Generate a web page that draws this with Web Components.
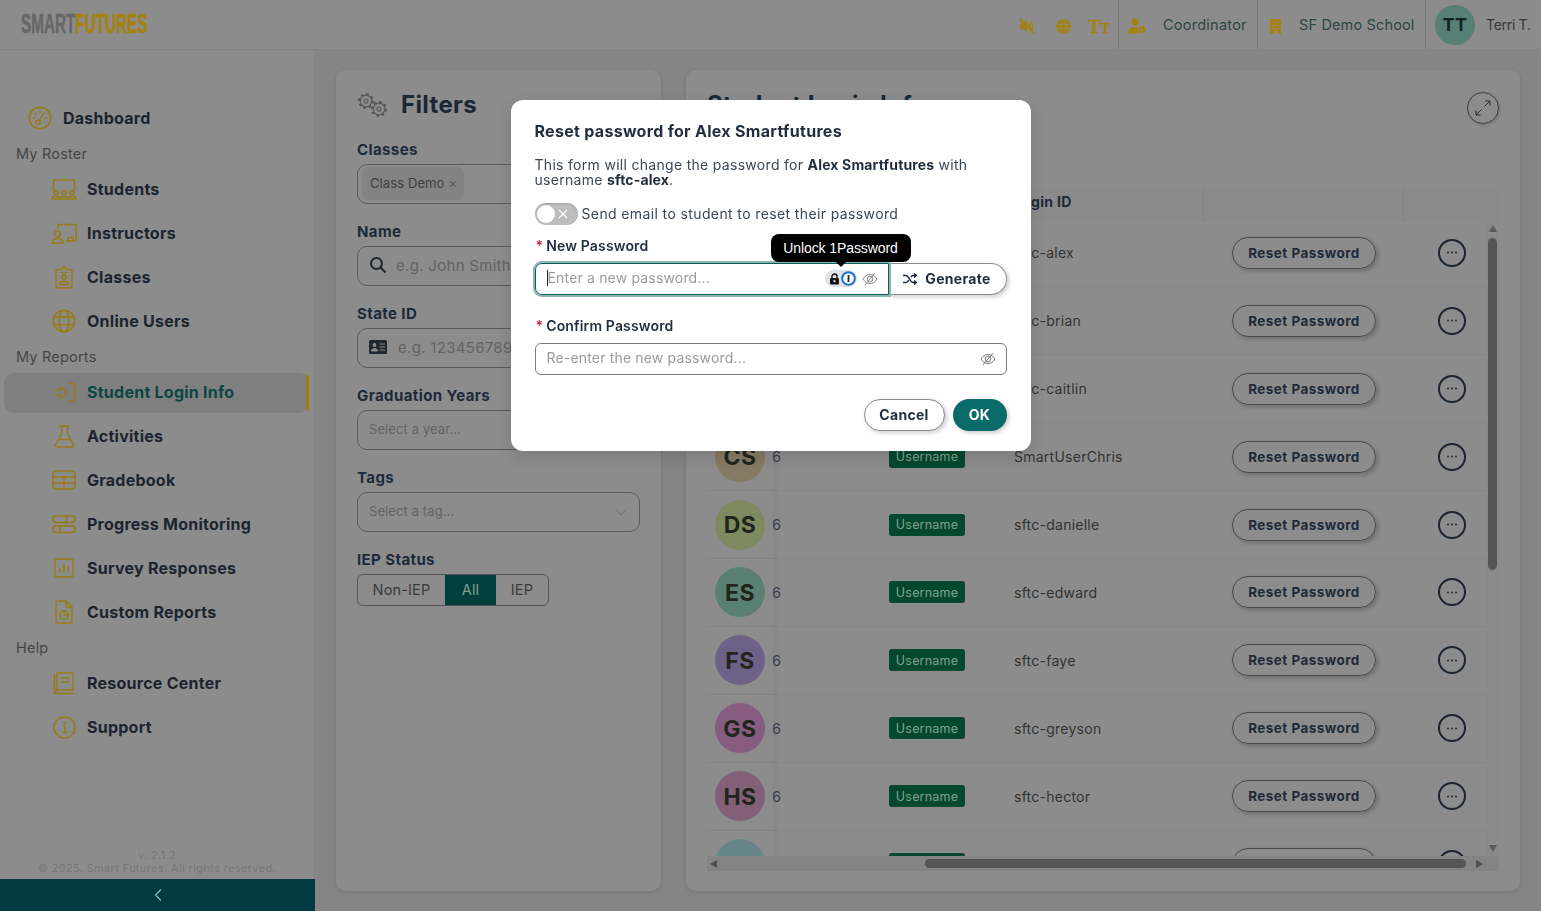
<!DOCTYPE html>
<html lang="en"><head><meta charset="utf-8"><title>Student Login Info</title>
<style>
html,body{margin:0;height:100%;overflow:hidden;background:#858585;font-family:Inter,"Liberation Sans",sans-serif;color:#1c2430}
</style></head>
<body>
<sf-app>
  <sf-header slot="header"></sf-header>
  <sf-sidebar slot="side"></sf-sidebar>
  <sf-filters slot="filters"></sf-filters>
  <sf-main slot="main"></sf-main>
</sf-app>
<sf-modal></sf-modal>
<script>
const FONT='font-family:Inter,"Liberation Sans",sans-serif;';
function def(name,css,html){
  customElements.define(name,class extends HTMLElement{
    connectedCallback(){
      if(this.shadowRoot)return;
      const r=this.attachShadow({mode:'open'});
      const h=typeof html==='function'?html(this):html;
      r.innerHTML='<style>'+css+'</style>'+h;
    }
  });
}
const g=(w,h,vb,inner,c='#977b18',sw=1.5)=>`<svg width="${w}" height="${h}" viewBox="${vb}" fill="none" stroke="${c}" stroke-width="${sw}" stroke-linecap="round" stroke-linejoin="round">${inner}</svg>`;
const ICONS={
 dashboard:g(24,24,'0 0 24 24','<circle cx="12" cy="12" r="10.8"/><path d="M11.2 14.6 15.8 6.5"/><circle cx="10.2" cy="16.2" r="2"/><path d="M5.2 12h1.600M7.400 7.400l1 1M12 4.600v1.600M18.800 12h-1.600"/>'),
 students:g(26,21,'0 0 26 21','<path d="M2.500 11V3a2 2 0 0 1 2-2h17a2 2 0 0 1 2 2v8"/><circle cx="5" cy="13.500" r="1.900"/><circle cx="13" cy="13.500" r="1.900"/><circle cx="21" cy="13.500" r="1.900"/><path d="M1 20c0-3.600 8-3.600 8 0zM9 20c0-3.600 8-3.600 8 0zM17 20c0-3.600 8-3.600 8 0z"/>'),
 instructors:g(26,21,'0 0 26 21','<path d="M7 5V2.500a1 1 0 0 1 1-1H25V18H15"/><circle cx="6.500" cy="11" r="3"/><path d="M1 20c0-6 11-6 11 0z"/><path d="M17 18v-3.500h5V18"/>'),
 classes:g(18,24,'0 0 18 24','<path d="M3 4.500h3L9 1.500l3 3h3a2 2 0 0 1 2 2v14.500a2 2 0 0 1-2 2H3a2 2 0 0 1-2-2V6.500a2 2 0 0 1 2-2z"/><path d="M6 7.500h6"/><circle cx="9" cy="12" r="2.200"/><path d="M4.500 19.500c0-4.500 9-4.500 9 0z"/>'),
 online:g(24,24,'0 0 24 24','<circle cx="12" cy="12" r="10.800"/><ellipse cx="12" cy="12" rx="4.800" ry="10.800"/><path d="M2 8.200h20M2 15.800h20"/>'),
 login:g(25,21,'0 0 25 21','<path d="M2 8h1M5 8h3.500V4.500L15 10.500l-6.500 6V13H5M2 13h1"/><path d="M17 1.500h4a2 2 0 0 1 2 2v14a2 2 0 0 1-2 2h-4"/>'),
 flask:g(21,23,'0 0 21 23','<path d="M6 1h9M7.500 1v8L1.500 19.500A1.700 1.700 0 0 0 3 22h15a1.700 1.700 0 0 0 1.500-2.500L13.500 9V1M4.800 14.500h11.400"/>'),
 grade:g(24,20,'0 0 24 20','<rect x="1" y="1" width="22" height="18" rx="3"/><path d="M1 7h22M1 13h22M12 7v12"/>'),
 progress:g(24,19,'0 0 24 19','<rect x="1" y="1" width="22" height="6.500" rx="3"/><rect x="1" y="11" width="22" height="6.500" rx="3"/><path d="M14.500 1v6.500M8 11v6.500"/>'),
 survey:g(20,20,'0 0 20 20','<rect x="1" y="1" width="18" height="18" rx="1.500"/><path d="M6 14v-3M10 14V7M14 14v-5"/>'),
 custom:g(18,24,'0 0 18 24','<path d="M2 1h9l6 6v15a1 1 0 0 1-1 1H2a1 1 0 0 1-1-1V2a1 1 0 0 1 1-1zM11 1v6h6"/><circle cx="9" cy="15" r="4.200"/><path d="M9 15V10.800M9 15h4.200"/>'),
 resource:g(22,23,'0 0 22 23','<path d="M4 18V2a1 1 0 0 1 1-1h14a1 1 0 0 1 1 1v16zM1.500 3v18.500H21M4 1v17M1.500 21.500 4 18M9 6h7M9 10h7"/>'),
 support:g(23,23,'0 0 23 23','<circle cx="11.500" cy="11.500" r="10.500"/><path d="M10 10h1.800v6.500M9.500 16.500h4.500"/><circle cx="11.500" cy="6.800" r=".6"/>')
};
const GH='#a3820f';
const HICONS={
 mute:`<svg width="20" height="18" viewBox="0 0 20 18"><path fill="${GH}" d="M2 6h3l5-3v12l-5-3H2z"/><path d="M12 6c1.200 1 1.200 5 0 6M14.500 4c2 2 2 8 0 10" stroke="${GH}" fill="none" stroke-width="1.800"/><path d="M2 1l16 16" stroke="${GH}" stroke-width="2.200"/></svg>`,
 globe:`<svg width="15" height="15" viewBox="0 0 15 15"><circle cx="7.500" cy="7.500" r="7.300" fill="${GH}"/><path d="M1 5.300h13M1 9.700h13M7.500 .5c-4 4-4 10 0 14M7.500 .5c4 4 4 10 0 14" fill="none" stroke="#8c8c8c" stroke-width=".7"/></svg>`,
 person:`<svg width="18" height="16" viewBox="0 0 18 16"><circle cx="7" cy="4" r="3.500" fill="${GH}"/><path fill="${GH}" d="M0 15.500c0-5 3-6.500 7-6.500 1.200 0 2 .2 2.800.4V15.500z"/><circle cx="13.800" cy="11.500" r="2.400" fill="none" stroke="${GH}" stroke-width="2.400"/></svg>`,
 building:`<svg width="11" height="15" viewBox="0 0 11 15"><path fill="${GH}" d="M0 0h11v15H7v-3H4v3H0z"/><path stroke="#8c8c8c" stroke-width="1.100" stroke-dasharray="1.400 1.300" d="M2 3.500h7M2 6.500h7M2 9.500h7"/></svg>`
};

def('sf-app',`:host{display:grid;grid-template-columns:315px 1fr;grid-template-rows:50px 1fr;height:100vh;background:#858585}
 ::slotted([slot=header]){grid-column:1/3}
 .m{display:flex;gap:25px;padding:20px 21px;min-width:0;min-height:0}`,
 `<slot name="header"></slot><slot name="side"></slot><div class="m"><slot name="filters"></slot><slot name="main"></slot></div>`);

def('sf-header',`:host{display:flex;justify-content:space-between;align-items:stretch;height:50px;background:#8c8c8c;box-sizing:border-box;border-bottom:1px solid #838383;${FONT}}
 .logo{display:flex;align-items:center;padding-left:21px;font:700 27px "Liberation Sans",sans-serif;height:49px;transform:scaleX(.566);transform-origin:21px 0;white-space:nowrap}
 .logo i{font-style:normal;color:#666;-webkit-text-stroke:.4px #666}.logo b{color:#a3820f;font-weight:700;-webkit-text-stroke:.7px #a3820f}
 .r{display:flex;align-items:stretch}
 .icons{display:flex;align-items:center;gap:18px;width:110px;padding-left:10px;padding-top:3px;box-sizing:border-box}
 .icons>*{width:18px;display:flex;justify-content:center;align-items:baseline}
 .tt{font:700 19px "Liberation Serif",serif;color:${GH};line-height:1;white-space:nowrap;-webkit-text-stroke:.3px ${GH}}.tt small{font-size:14px}
 .seg{display:flex;align-items:center;border-left:1px solid #777;box-sizing:border-box;font-size:14.500px;letter-spacing:.25px;color:#2f4543;white-space:nowrap}
 .a{width:139px;padding-left:9px;gap:17px}.b{width:168px;padding-left:12px;gap:18px;letter-spacing:.15px}.c{width:116px;padding-left:9px;gap:11px;color:#363636;font-size:14px;letter-spacing:-.3px}
 .s{display:flex;padding-top:3px}
 .av{width:40px;height:40px;border-radius:50%;background:#587f74;color:#132320;font-weight:700;font-size:18px;display:flex;align-items:center;justify-content:center;letter-spacing:.5px}`,
 `<div class="logo"><i>SMART</i><b>FUTURES</b></div>
  <div class="r"><div class="icons"><span>${HICONS.mute}</span><span>${HICONS.globe}</span><span class="tt">T<small>T</small></span></div>
  <div class="seg a"><span class="s">${HICONS.person}</span><span>Coordinator</span></div>
  <div class="seg b"><span class="s">${HICONS.building}</span><span>SF Demo School</span></div>
  <div class="seg c"><span class="av">TT</span><span>Terri T.</span></div></div>`);

def('sf-nav-label',`:host{display:flex;align-items:center;height:27px;padding-left:16px;font-size:14.500px;letter-spacing:.2px;color:#454545}`,`<slot></slot>`);
def('sf-nav-item',`:host{display:flex;align-items:center;height:40px;margin:2px 5px 2px 4px;padding-left:45px;gap:8px;border-radius:10px;font-weight:700;font-size:16px;letter-spacing:.25px;color:#1c2430;position:relative}
 :host([top]){padding-left:21px}
 :host([active]){background:#7f7f7f;color:#0b4643;margin-top:3px;margin-bottom:1px;padding-bottom:2px;box-sizing:border-box}
 :host([active])::after{content:"";position:absolute;right:0;top:2px;bottom:2px;width:3px;border-radius:2px;background:#9c7f14}
 .i{width:30px;display:flex;justify-content:center;align-items:center}svg{display:block}`,
 h=>`<span class="i">${ICONS[h.getAttribute('icon')]||''}</span><slot></slot>`);

def('sf-sidebar',`:host{display:flex;flex-direction:column;background:#8c8c8c;border-right:1px solid #858585;box-sizing:border-box;width:315px;padding-top:46px;min-height:0}
 .f{margin-top:auto;text-align:center;color:#777;font-size:10.800px;line-height:13px;letter-spacing:.45px;padding-bottom:4px}
 .bar{height:32px;background:#013a40;display:flex;align-items:center;justify-content:center;margin-right:-1px}`,
 `<sf-nav-item top icon="dashboard">Dashboard</sf-nav-item>
  <sf-nav-label>My Roster</sf-nav-label>
  <sf-nav-item icon="students">Students</sf-nav-item>
  <sf-nav-item icon="instructors">Instructors</sf-nav-item>
  <sf-nav-item icon="classes">Classes</sf-nav-item>
  <sf-nav-item icon="online">Online Users</sf-nav-item>
  <sf-nav-label>My Reports</sf-nav-label>
  <sf-nav-item active icon="login">Student Login Info</sf-nav-item>
  <sf-nav-item icon="flask">Activities</sf-nav-item>
  <sf-nav-item icon="grade">Gradebook</sf-nav-item>
  <sf-nav-item icon="progress">Progress Monitoring</sf-nav-item>
  <sf-nav-item icon="survey">Survey Responses</sf-nav-item>
  <sf-nav-item icon="custom">Custom Reports</sf-nav-item>
  <sf-nav-label>Help</sf-nav-label>
  <sf-nav-item icon="resource">Resource Center</sf-nav-item>
  <sf-nav-item icon="support">Support</sf-nav-item>
  <div class="f">v. 2.1.2<br>© 2025. Smart Futures. All rights reserved.</div>
  <div class="bar"><svg width="10" height="14" viewBox="0 0 10 14" fill="none" stroke="#8fbfc0" stroke-width="1.200"><path d="M8 1.500 2.500 7 8 12.500"/></svg></div>`);

def('sf-field',`:host{display:block;margin-bottom:18px}
 label{display:block;height:20px;line-height:20px;font-weight:700;font-size:15px;letter-spacing:.4px;color:#1c2a3a;margin-bottom:4px}
 .c{display:flex;align-items:center;height:40px;box-sizing:border-box;padding-bottom:2px;border:1px solid #5a5a5a;border-radius:10px;color:#636363;font-size:15px;letter-spacing:.3px;overflow:hidden;white-space:nowrap;position:relative}
 :host([plain]) .c{border:0;padding:0;height:32px;overflow:visible}`,
 h=>`<label>${h.getAttribute('label')}</label><div class="c"><slot></slot></div>`);

def('sf-segmented',`:host{display:inline-flex;height:32px;border:1px solid #555;border-radius:6px;box-sizing:border-box;overflow:hidden;font-size:14.500px;letter-spacing:.15px;color:#3a3a3a}
 span{display:flex;align-items:center;justify-content:center;width:87px;padding-bottom:1px}
 .on{width:51px;background:#013f3c;color:#7fa198}.e{width:52px}`,
 `<span>Non-IEP</span><span class="on">All</span><span class="e">IEP</span>`);

const gear=(cx,cy)=>`<circle cx="${cx}" cy="${cy}" r="5.800" fill="none" stroke="#565656" stroke-width="1.200"/><circle cx="${cx}" cy="${cy}" r="7" fill="none" stroke="#565656" stroke-width="2" stroke-dasharray="2.500 3"/><circle cx="${cx}" cy="${cy}" r="2" fill="none" stroke="#565656" stroke-width="1.100"/>`;
def('sf-filters',`:host{display:block;width:325px;background:#8c8c8c;border-radius:10px;box-sizing:border-box;padding:20px 21px;box-shadow:0 1px 4px rgba(0,0,0,.12);${FONT}}
 .t{display:flex;align-items:center;height:30px;margin-bottom:20px;gap:13px;font-weight:700;font-size:24px;letter-spacing:.35px;color:#1a2735}
 .t span{position:relative;top:-1px}
 .ph{margin-left:11px;font-size:13px;letter-spacing:.1px;color:#636363}
 .chip{margin-left:4px;height:33px;width:102px;border-radius:6px;background:#838383;display:flex;align-items:center;box-sizing:border-box;padding-left:8px;font-size:13px;letter-spacing:.1px;color:#3f3f3f;gap:4px}
 .chip i{font-style:normal;color:#555}
 .pi{margin-left:11px;display:flex;margin-right:9px}
 .arrow{position:absolute;right:12px;top:13px}`,
 `<div class="t"><svg width="31" height="26" viewBox="0 0 31 26">${gear(9,9)}${gear(22,17)}</svg><span>Filters</span></div>
  <sf-field label="Classes"><span class="chip">Class Demo <i>×</i></span></sf-field>
  <sf-field label="Name"><span class="pi"><svg width="18" height="18" viewBox="0 0 18 18" fill="none" stroke="#1d2328" stroke-width="2"><circle cx="7.500" cy="7.500" r="5.500"/><path d="M11.500 11.500 16.500 16.500"/></svg></span><span>e.g. John Smith</span></sf-field>
  <sf-field label="State ID"><span class="pi" style="margin-right:11px"><svg width="18" height="14" viewBox="0 0 18 14"><rect width="18" height="14" rx="1.500" fill="#1f2730"/><circle cx="5.500" cy="5" r="1.900" fill="#8c8c8c"/><path d="M2.500 11c0-3.500 6-3.500 6 0zM10.500 4h5.500M10.500 7h5.500M10.500 10h5.500" fill="#8c8c8c" stroke="#8c8c8c" stroke-width="1"/></svg></span><span>e.g. 123456789</span></sf-field>
  <sf-field label="Graduation Years"><span class="ph">Select a year...</span></sf-field>
  <sf-field label="Tags"><span class="ph">Select a tag...</span><svg class="arrow" width="12" height="12" viewBox="0 0 12 12" fill="none" stroke="#6f6f6f"><path d="M1 3.500 6 9l5-5.500"/></svg></sf-field>
  <sf-field plain label="IEP Status"><sf-segmented></sf-segmented></sf-field>`);

def('sf-row',`:host{display:grid;grid-template-columns:66px 116px 125px 218px 206px 28px 20px;height:67.900px;box-sizing:border-box;border-bottom:1px solid #868686;align-items:center;font-size:14px;letter-spacing:.25px;color:#333;flex:none}
 .av{width:50px;height:50px;border-radius:50%;margin-left:8px;display:flex;align-items:center;justify-content:center;font-weight:700;font-size:23px;letter-spacing:.5px;color:#22251e;padding-top:1px;box-sizing:border-box}
 .st{height:100%;display:flex;align-items:center;box-shadow:4px 0 4px rgba(0,0,0,.035);background:#8c8c8c;position:relative}
 .y{margin-left:-1px;color:#3c3f4d;font-size:14.500px}
 .bd{width:76px;height:22px;border-radius:3px;background:#04482f;color:#7fa192;font-size:12.500px;letter-spacing:.2px;display:flex;align-items:center;justify-content:center}
 .btn{width:144px;height:32px;box-sizing:border-box;border:1px solid #4a4a4a;border-radius:16px;display:flex;align-items:center;justify-content:center;font-weight:700;font-size:13.500px;letter-spacing:.45px;color:#1c2a3a;box-shadow:2px 2px 4px rgba(0,0,0,.22)}
 .m{width:28px;height:28px;border-radius:50%;box-sizing:border-box;border:2px solid #1c2430;display:flex;align-items:center;justify-content:center}`,
 h=>{const e=h.hasAttribute('cut');return `<div class="st"><div class="av" style="background:${h.getAttribute('c')}">${e?'':h.getAttribute('i')}</div></div><span class="y">${e?'':'6'}</span><span class="bd">${e?'':'Username'}</span><span>${e?'':h.getAttribute('id-text')}</span><span class="btn">${e?'':'Reset Password'}</span><span class="m"><svg width="12" height="3" viewBox="0 0 12 3" fill="#1c2430"><circle cx="2" cy="1.500" r=".95"/><circle cx="6" cy="1.500" r=".95"/><circle cx="10" cy="1.500" r=".95"/></svg></span><span></span>`});

const rows=[['AS','#768676','sftc-alex'],['BS','#768676','sftc-brian'],['CS','#857b63','sftc-caitlin'],['CS','#857b63','SmartUserChris'],['DS','#7f8a60','sftc-danielle'],['ES','#5a8074','sftc-edward'],['FS','#6c6288','sftc-faye'],['GS','#855c80','sftc-greyson'],['HS','#836078','sftc-hector'],['','#668588','']];
def('sf-table',`:host{display:grid;grid-template-columns:779px 13px;grid-template-rows:34px 634px 15px;width:792px;${FONT}}
 .h{grid-column:1/3;display:grid;grid-template-columns:307px 189px 200px 96px;background:#8a8a8a;border-radius:6px 6px 0 0;font-weight:700;font-size:14px;letter-spacing:.3px;color:#1c2a3a;align-items:stretch}
 .h span{display:flex;align-items:center;padding-bottom:8px}.h .l{border-left:1px solid #828282}
 .b{overflow:hidden;display:flex;flex-direction:column;height:634px}
 .b>:first-child{margin-top:-2.500px}
 .v{background:#8a8a8a;display:flex;flex-direction:column;align-items:center}
 .up{width:0;height:0;border:4.500px solid transparent;border-top:0;border-bottom:7px solid #5a5a5a;margin-top:3px}
 .th{width:9px;height:332px;background:#555;border-radius:5px;margin-top:6px}
 .dn{width:0;height:0;border:4.500px solid transparent;border-bottom:0;border-top:7px solid #5a5a5a;margin-top:auto;margin-bottom:4px}
 .hs{grid-column:1/3;background:#848484;display:flex;align-items:center;padding-left:3px;box-sizing:border-box}
 .lf{width:0;height:0;border:4.500px solid transparent;border-left:0;border-right:7px solid #4f4f4f}
 .rt{width:0;height:0;border:4.500px solid transparent;border-right:0;border-left:7px solid #4f4f4f;margin-left:10px}
 .tx{width:541px;height:9px;background:#555;border-radius:5px;margin-left:208px}`,
 `<div class="h"><span></span><span>Login ID</span><span class="l"></span><span class="l"></span></div>
  <div class="b">${rows.map(r=>`<sf-row ${r[0]?'':'cut'} i="${r[0]}" c="${r[1]}" id-text="${r[2]}"></sf-row>`).join('')}</div>
  <div class="v"><i class="up"></i><i class="th"></i><i class="dn"></i></div>
  <div class="hs"><i class="lf"></i><i class="tx"></i><i class="rt"></i></div>`);

def('sf-main',`:host{display:block;width:834px;background:#8c8c8c;border-radius:10px;box-sizing:border-box;padding:20px 21px;box-shadow:0 1px 4px rgba(0,0,0,.12);${FONT}}
 .t{display:flex;justify-content:space-between;align-items:flex-start;height:98px}
 h1{margin:0;height:30px;line-height:30px;font-weight:700;font-size:24px;letter-spacing:.3px;color:#1a2735}
 .x{width:32px;height:32px;border-radius:50%;border:1px solid #3f3f3f;box-sizing:border-box;display:flex;align-items:center;justify-content:center;margin:2px 0 0 0;box-shadow:1px 1px 3px rgba(0,0,0,.2)}`,
 `<div class="t"><h1>Student Login Info</h1><span class="x"><svg width="16" height="16" viewBox="0 0 16 16" fill="none" stroke="#2a2a2a" stroke-width="1"><path d="M9.500 6.500 15 1M10.500 1H15V5.500M6.500 9.500 1 15M1 10.500V15H5.500"/></svg></span></div><sf-table></sf-table>`);

const eye=(c)=>`<svg width="16" height="14" viewBox="0 0 16 14" fill="none" stroke="${c}" stroke-width="1"><path d="M1 7c3.500-6 10.500-6 14 0-3.500 6-10.500 6-14 0z"/><circle cx="8" cy="7" r="2.800"/><path d="M13 1 3 13"/></svg>`;
def('sf-modal',`:host{position:fixed;inset:0;display:flex;justify-content:center;align-items:flex-start;padding-top:100px;box-sizing:border-box;z-index:10;${FONT}}
 .d{width:520px;height:351px;background:#fff;border-radius:12px;box-sizing:border-box;padding:20px 24px;position:relative;color:#1f2d3d;box-shadow:0 6px 16px rgba(0,0,0,.12)}
 h2{margin:0 0 15px;height:22px;line-height:22px;font-size:16px;font-weight:700;letter-spacing:.3px;color:#1f2d3d}
 p{margin:0 0 16px;font-size:14px;line-height:15px;letter-spacing:.3px;color:#3b4754}p b{font-weight:700;letter-spacing:.15px;color:#1f2d3d}
 .tg{display:flex;align-items:center;gap:4px;height:22px;margin-bottom:11px;font-size:14px;letter-spacing:.38px;color:#3b4754}
 .tg>span:last-child{position:relative;top:-1px}
 .sw{width:43px;height:22px;border-radius:11px;background:#bdbdbd;position:relative;display:flex;align-items:center;box-shadow:inset 0 1px 2px rgba(0,0,0,.15)}
 .sw i{width:18px;height:18px;border-radius:50%;background:#fff;margin-left:2px}
 .sw svg{margin-left:3px}
 .lb{height:20px;line-height:20px;font-size:14px;font-weight:600;letter-spacing:.15px;color:#1f2d3d;margin-bottom:7px;display:flex;gap:3px;padding-left:1px}
 .lb em{color:#c0294a;font-style:normal;font-weight:600}
 .ir{display:flex;height:32px;margin-bottom:21px}
 .in{flex:1;box-sizing:border-box;border:1px solid #7a7a7a;border-radius:6px;display:flex;align-items:center;padding:0 0 3px 11px;font-size:14px;letter-spacing:.17px;color:#9a9a9a;height:32px;position:relative}
 .foc{border:1.500px solid #0b5e5e;border-radius:7px 0 0 7px;box-shadow:0 0 0 2px #8ab5b1;width:354px;flex:none;padding-left:11px}
 .car{width:1px;height:16px;background:#222}
 .e{margin-left:auto;margin-right:10px;display:flex;align-items:center;position:relative;top:1.500px}
 .pill{position:absolute;right:31px;top:6px;width:32px;height:17px;border-radius:9px;background:#dfe3e6;display:flex;align-items:center;justify-content:space-between;padding:0 1px 0 4px;box-sizing:border-box}
 .gen{width:118px;height:32px;box-sizing:border-box;padding-bottom:1px;border:1px solid #8a8a8a;border-left:0;border-radius:0 16px 16px 0;display:flex;align-items:center;justify-content:center;gap:8px;font-size:14px;font-weight:700;letter-spacing:.3px;color:#1f2d3d;box-shadow:2px 2px 4px rgba(0,0,0,.2)}
 .ft{display:flex;justify-content:flex-end;gap:8px;margin-top:24px}
 .bt{height:32px;border-radius:16px;box-sizing:border-box;padding-bottom:1px;display:flex;align-items:center;justify-content:center;font-size:14px;font-weight:700;letter-spacing:.3px;box-shadow:2px 2px 4px rgba(0,0,0,.2)}
 .cn{width:81px;border:1px solid #8a8a8a;color:#1f2d3d;background:#fff}.ok{width:54px;background:#0b6b6b;color:#fff}
 .tip{position:absolute;left:260px;top:134px;width:140px;height:28px;background:#000;color:#fff;border-radius:8px;font:14px "Liberation Sans",Arial,sans-serif;letter-spacing:-.1px;display:flex;align-items:center;justify-content:center}
 .tip::after{content:"";position:absolute;left:64px;bottom:-5px;border:6px solid transparent;border-bottom:0;border-top:6px solid #000}
 `,
 `<div class="d" role="dialog">
   <h2>Reset password for Alex Smartfutures</h2>
   <p>This form will change the password for <b>Alex Smartfutures</b> with<br>username <b>sftc-alex</b>.</p>
   <div class="tg"><span class="sw"><i></i><svg width="10" height="10" viewBox="0 0 10 10" stroke="#fff" stroke-width="1.100"><path d="M1 1 9 9M9 1 1 9"/></svg></span><span>Send email to student to reset their password</span></div>
   <div class="lb"><em>*</em><span>New Password</span></div>
   <div class="ir"><div class="in foc"><i class="car"></i><span>Enter a new password...</span>
      <span class="pill"><svg width="11" height="12" viewBox="0 0 11 12"><path d="M3 5V3.500a2.500 2.500 0 0 1 5 0V5" fill="none" stroke="#111" stroke-width="1.400"/><rect x="1" y="5" width="9" height="6.500" rx="1.200" fill="#111"/><circle cx="5.500" cy="8.200" r="1.100" fill="#dfe3e6"/></svg><svg width="15" height="15" viewBox="0 0 15 15"><circle cx="7.500" cy="7.500" r="6.300" fill="#fff" stroke="#1a73c8" stroke-width="2"/><path d="M7.500 4v7" stroke="#1b2a3a" stroke-width="1.800"/></svg></span>
      <span class="e">${eye('#8a8a8a')}</span></div>
     <div class="gen"><svg width="14" height="12" viewBox="0 0 14 12" fill="none" stroke="#1f2d3d" stroke-width="1.500"><path d="M0 2.500h3c3 0 4 7 7 7h3M0 9.500h3c1.200 0 2-1 2.800-2.500M8 4.200C8.500 3.300 9 2.500 10 2.500h3M11 .5l2.300 2L11 4.500M11 7.500l2.300 2-2.300 2"/></svg><span>Generate</span></div></div>
   <div class="lb"><em>*</em><span>Confirm Password</span></div>
   <div class="in"><span>Re-enter the new password...</span><span class="e">${eye('#7a7a7a')}</span></div>
   <div class="ft"><span class="bt cn">Cancel</span><span class="bt ok">OK</span></div>
   <div class="tip">Unlock 1Password</div>
  </div>`);
</script>
</body></html>
